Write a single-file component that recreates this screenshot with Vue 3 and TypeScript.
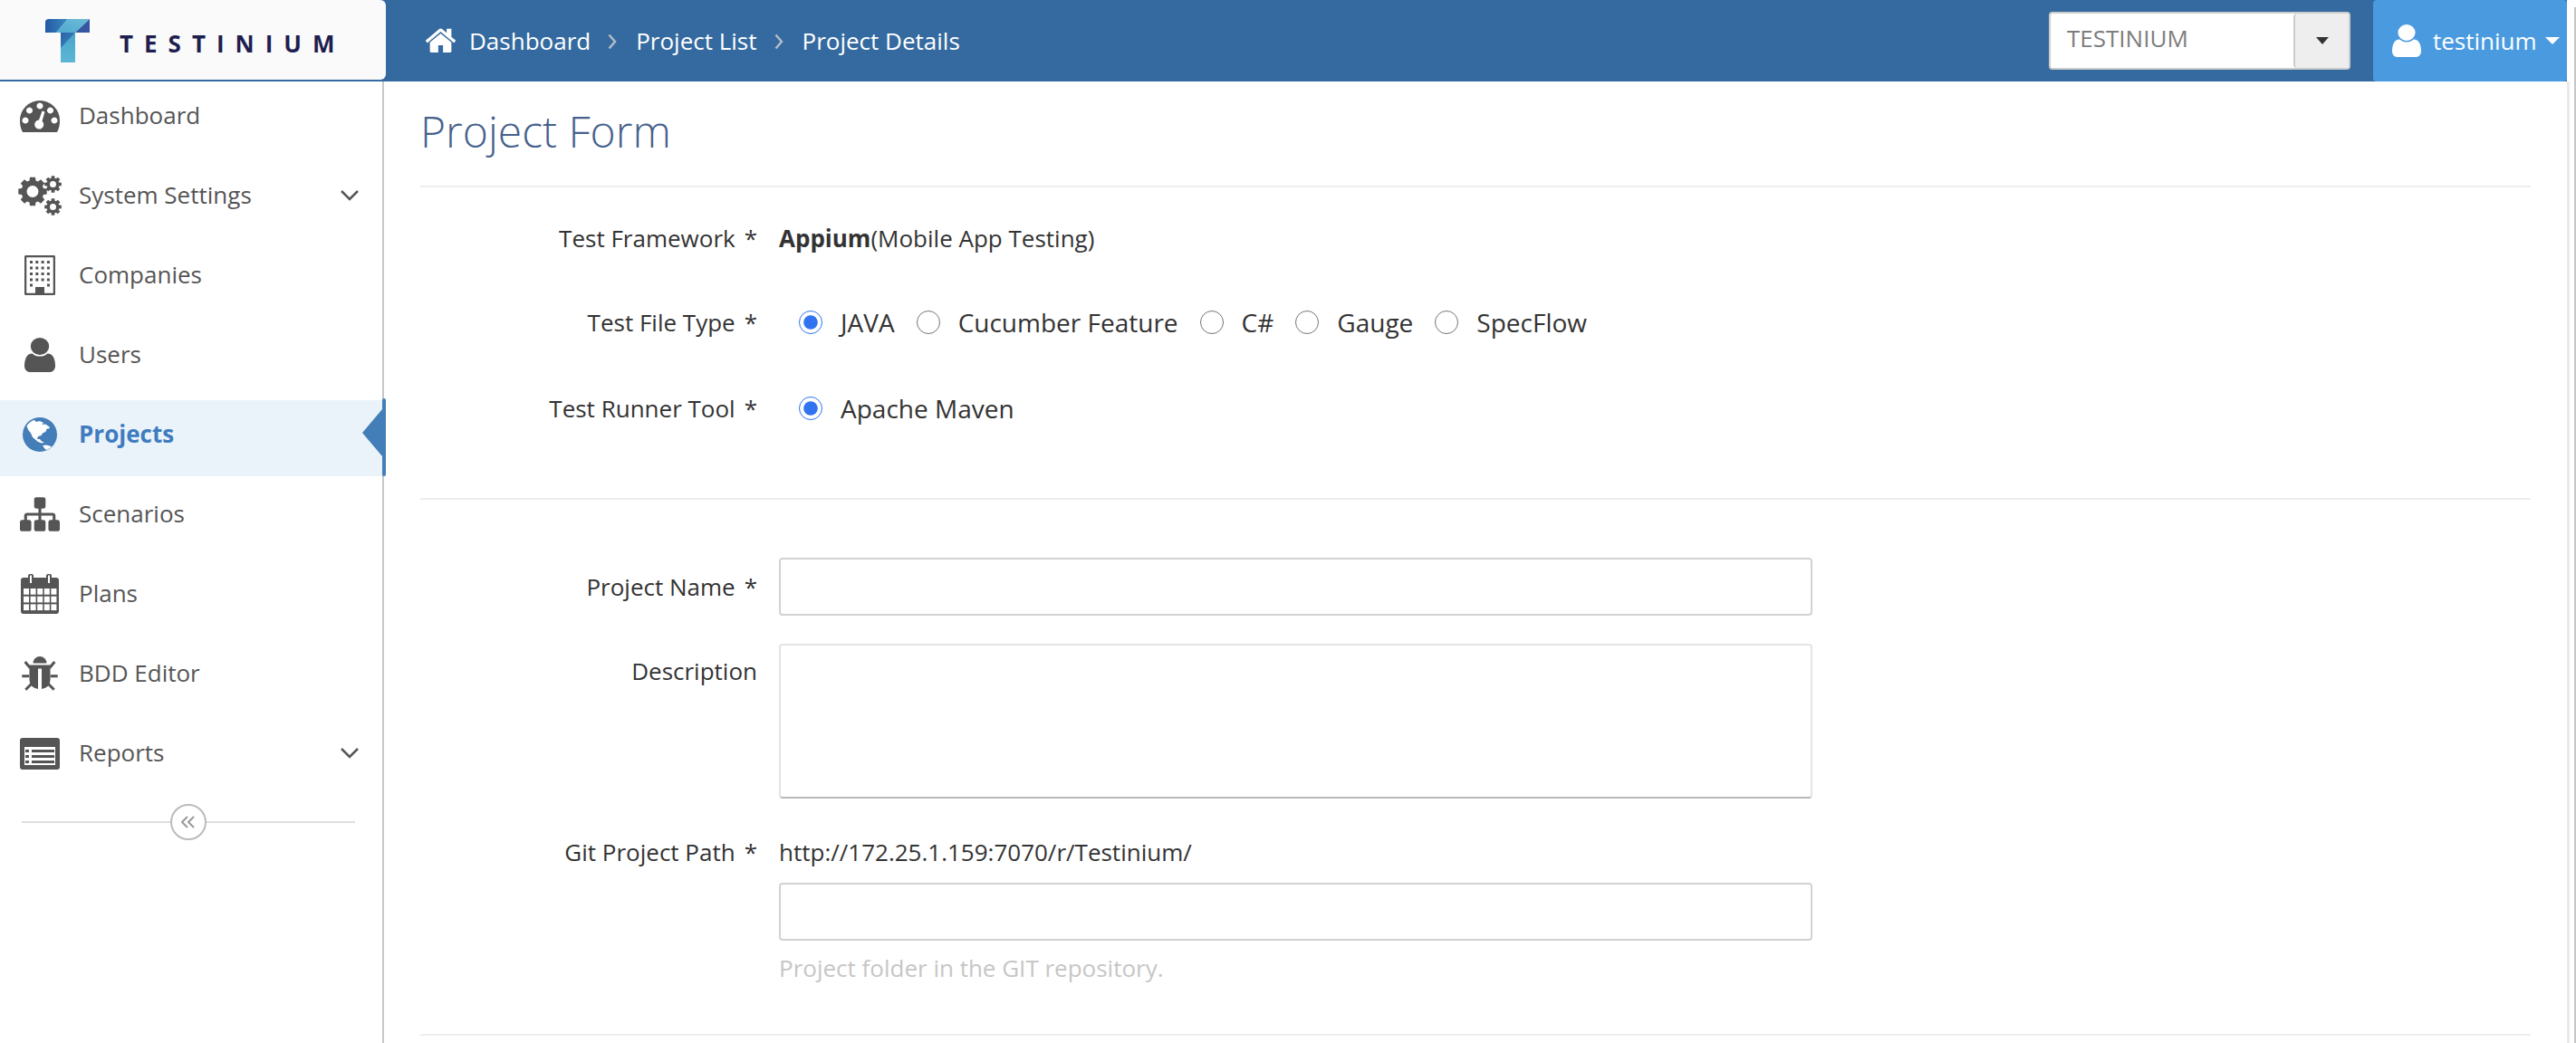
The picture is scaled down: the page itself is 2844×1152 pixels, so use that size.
<script setup lang="ts">
interface MenuItem {
  label: string
  icon: string
  active?: boolean
  children?: boolean
}

const menu: MenuItem[] = [
  { label: 'Dashboard', icon: 'dashboard' },
  { label: 'System Settings', icon: 'cogs', children: true },
  { label: 'Companies', icon: 'building' },
  { label: 'Users', icon: 'user' },
  { label: 'Projects', icon: 'globe', active: true },
  { label: 'Scenarios', icon: 'sitemap' },
  { label: 'Plans', icon: 'calendar' },
  { label: 'BDD Editor', icon: 'bug' },
  { label: 'Reports', icon: 'list', children: true },
]

const fileTypes = ['JAVA', 'Cucumber Feature', 'C#', 'Gauge', 'SpecFlow']

const userPath =
  'M1536 1399q0 109-62.5 187t-150.5 78h-854q-88 0-150.5-78t-62.5-187q0-85 8.5-160.5t31.5-152 58.5-131 94-89 134.5-34.5q131 128 313 128t313-128q76 0 134.5 34.5t94 89 58.5 131 31.5 152 8.5 160.5zm-256-887q0 159-112.5 271.5t-271.5 112.5-271.5-112.5-112.5-271.5 112.5-271.5 271.5-112.5 271.5 112.5 112.5 271.5z'
const homePath =
  'M1472 992v480q0 26-19 45t-45 19h-384v-384h-256v384h-384q-26 0-45-19t-19-45v-480q0-1 .5-3t.5-3l575-474 575 474q1 2 1 6zm223-69l-62 74q-8 9-21 11h-3q-13 0-21-7l-692-577-692 577q-12 8-24 7-13-2-21-11l-62-74q-8-10-7-23.5t11-21.5l719-599q32-26 76-26t76 26l244 204v-195q0-14 9-23t23-9h192q14 0 23 9t9 23v408l219 182q10 8 11 21.5t-7 23.5z'
const sitemapPath =
  'M1792 1248v320q0 40-28 68t-68 28h-320q-40 0-68-28t-28-68v-320q0-40 28-68t68-28h96v-192h-512v192h96q40 0 68 28t28 68v320q0 40-28 68t-68 28h-320q-40 0-68-28t-28-68v-320q0-40 28-68t68-28h96v-192h-512v192h96q40 0 68 28t28 68v320q0 40-28 68t-68 28h-320q-40 0-68-28t-28-68v-320q0-40 28-68t68-28h96v-192q0-52 38-90t90-38h512v-192h-96q-40 0-68-28t-28-68v-320q0-40 28-68t68-28h320q40 0 68 28t28 68v320q0 40-28 68t-68 28h-96v192h512q52 0 90 38t38 90v192h96q40 0 68 28t28 68z'

// toothed ring with a hole, used three times for the cogs icon
function gearPath(cx: number, cy: number, outer: number, inner: number, hole: number, teeth: number): string {
  const pts: string[] = []
  const step = (Math.PI * 2) / teeth
  for (let i = 0; i < teeth; i++) {
    const a = i * step
    const w = step * 0.24
    const pairs: [number, number][] = [
      [inner, a - step * 0.36],
      [outer, a - w],
      [outer, a + w],
      [inner, a + step * 0.36],
    ]
    for (const [r, t] of pairs) {
      pts.push(`${(cx + r * Math.cos(t)).toFixed(2)} ${(cy + r * Math.sin(t)).toFixed(2)}`)
    }
  }
  const ring = `M${pts.join('L')}Z`
  const cut = `M${cx - hole} ${cy}a${hole} ${hole} 0 1 0 ${hole * 2} 0a${hole} ${hole} 0 1 0 ${-hole * 2} 0Z`
  return ring + cut
}

const cogs = [gearPath(16, 17.5, 16, 12.5, 6.5, 8), gearPath(38.5, 9.5, 9.5, 7, 3.5, 8), gearPath(38.5, 34.5, 9.5, 7, 3.5, 8)]

const calendarCols = [0, 1, 2, 3, 4]
const calendarRows = [0, 1, 2]
const buildingCols = [0, 1, 2, 3]
const buildingRows = [0, 1, 2, 3]
</script>

<template>
  <div class="app">
    <header class="topbar">
      <div class="brand">
        <svg class="brand-mark" viewBox="0 0 49 48" width="49" height="48">
          <defs>
            <linearGradient id="tmLeft" x1="0" y1="0" x2="1" y2="0">
              <stop offset="0" stop-color="#2458a4" />
              <stop offset="1" stop-color="#3a8cc2" />
            </linearGradient>
            <linearGradient id="tmMid" x1="0" y1="1" x2="1" y2="0">
              <stop offset="0" stop-color="#4fa8cf" />
              <stop offset="1" stop-color="#6cbcd8" />
            </linearGradient>
            <linearGradient id="tmFold" x1="0" y1="0" x2="1" y2="1">
              <stop offset="0" stop-color="#2a62a6" />
              <stop offset="1" stop-color="#3a8cc0" />
            </linearGradient>
            <linearGradient id="tmStem" x1="0" y1="0" x2="0" y2="1">
              <stop offset="0" stop-color="#4aa4cc" />
              <stop offset="1" stop-color="#5cb6d4" />
            </linearGradient>
          </defs>
          <path d="M4 0H25L12 15H0V4Q0 0 4 0Z" fill="url(#tmLeft)" />
          <path d="M25 0H49L33 15H12Z" fill="url(#tmMid)" />
          <path d="M49 0V15H33Z" fill="#3556a3" />
          <path d="M17 15H33V48H17Z" fill="url(#tmStem)" />
          <path d="M17 15H33L17 32Z" fill="url(#tmFold)" />
        </svg>
        <span class="brand-name">TESTINIUM</span>
      </div>
      <nav class="crumbs">
        <svg class="crumb-home" viewBox="0 128 1792 1408" width="37" height="29"><path :d="homePath" /></svg>
        <span>Dashboard</span>
        <svg class="crumb-sep" viewBox="0 0 10 18" width="10" height="18"><path d="M1.5 1.5L8 9L1.5 16.5" /></svg>
        <span>Project List</span>
        <svg class="crumb-sep" viewBox="0 0 10 18" width="10" height="18"><path d="M1.5 1.5L8 9L1.5 16.5" /></svg>
        <span>Project Details</span>
      </nav>
      <div class="company-select">
        <span class="company-value">TESTINIUM</span>
        <span class="company-btn"><i class="caret-dark"></i></span>
      </div>
      <div class="user-menu">
        <svg viewBox="256 128 1280 1536" width="32" height="36" preserveAspectRatio="none"><path :d="userPath" /></svg>
        <span>testinium</span>
        <i class="caret-light"></i>
      </div>
    </header>

    <div class="body">
      <aside class="sidebar">
        <ul class="menu">
          <li v-for="item in menu" :key="item.label" class="menu-item" :class="{ active: item.active }">
            <span class="menu-icon">
              <svg v-if="item.icon === 'dashboard'" viewBox="0 0 44 35" width="44" height="35">
                <path fill-rule="evenodd" d="M22 0A22 22 0 0 1 44 22Q44 30 41 35H3Q0 30 0 22A22 22 0 0 1 22 0ZM22 2.5a3.5 3.5 0 1 0 .01 0ZM10.5 7.5a3.5 3.5 0 1 0 .01 0ZM33.500 7.5a3.500 3.500 0 1 0 .01 0ZM6 18.5a3.500 3.500 0 1 0 .01 0ZM38 18.500a3.500 3.500 0 1 0 .01 0ZM24.500 11.500L21 21.600a5 5 0 1 0 3.500 1.200L27.500 12.500Z" />
              </svg>
              <svg v-else-if="item.icon === 'cogs'" viewBox="0 0 48 44" width="48" height="44">
                <path v-for="d in cogs" :key="d" fill-rule="evenodd" :d="d" />
              </svg>
              <svg v-else-if="item.icon === 'building'" viewBox="0 0 34 44" width="34" height="44">
                <rect x="1" y="1" width="32" height="42" rx="1.500" fill="none" stroke="#555" stroke-width="2.500" />
                <template v-for="r in buildingRows" :key="r">
                  <rect v-for="c in buildingCols" :key="c" :x="6 + c * 6.300" :y="6 + r * 6.500" width="3" height="3" />
                </template>
                <rect x="6" y="31.500" width="3" height="3" />
                <rect x="25" y="31.500" width="3" height="3" />
                <path d="M12 43V35H22V43Z" />
              </svg>
              <svg v-else-if="item.icon === 'user'" viewBox="256 128 1280 1536" width="34" height="38" preserveAspectRatio="none">
                <path :d="userPath" />
              </svg>
              <svg v-else-if="item.icon === 'globe'" viewBox="0 0 38 38" width="38" height="38">
                <circle cx="19" cy="19" r="19" fill="#447eb8" />
                <path fill="#fff" d="M4.500 9.500Q8 4 13 3L15 5L19 4L23 6L21 8L25 7.500L29 10L30 12L26 13Q27 15 25 16L22 17.500Q21 20 19 20.500L17 21L16 24L19 24L21 26.500L24 27.500L21 28.500L17 27L14 24.500L11 22L9 17.500L6 13.500Z" />
                <path fill="#fff" d="M22 31L26 30.500L30 31.500L32 32.500Q29 35 26 36L24 34Z" />
              </svg>
              <svg v-else-if="item.icon === 'sitemap'" viewBox="0 128 1792 1536" width="44" height="38">
                <path :d="sitemapPath" />
              </svg>
              <svg v-else-if="item.icon === 'calendar'" viewBox="0 0 42 44" width="42" height="44">
                <path fill-rule="evenodd" d="M3 4H8V1.500Q8 0 10 0H12Q14 0 14 1.500V4H28V1.500Q28 0 30 0H32Q34 0 34 1.500V4H39Q42 4 42 7V41Q42 44 39 44H3Q0 44 0 41V7Q0 4 3 4ZM10 1.500V10H12V1.500ZM30 1.500V10H32V1.500Z" />
                <template v-for="r in calendarRows" :key="r">
                  <rect v-for="c in calendarCols" :key="c" class="cell" :x="3 + c * 7.600" :y="16 + r * 8.700" width="6" height="6.700" />
                </template>
              </svg>
              <svg v-else-if="item.icon === 'bug'" viewBox="0 0 40 38" width="40" height="38">
                <path d="M12.500 7.500A7.500 7.500 0 0 1 27.500 7.500Z" />
                <path d="M8.500 9.500H31.500V26Q31.500 34 22 36V13.500H18V36Q8.500 34 8.500 26Z" />
                <path class="bug-leg" d="M3.700 6L9.300 12.700M36.300 6L30.700 12.700M0.300 21.700H8.300M39.700 21.700H31.700M4.300 36.700L10.300 30.700M35.700 36.700L29.700 30.700" />
              </svg>
              <svg v-else viewBox="0 0 44 35" width="44" height="35">
                <path fill-rule="evenodd" d="M3 0H41Q44 0 44 3V32Q44 35 41 35H3Q0 35 0 32V3Q0 0 3 0ZM5 10V30H39V10Z" />
                <path d="M6 13H10V16H6ZM13 13H38V16H13ZM6 19H10V22H6ZM13 19H38V22H13ZM6 25H10V28H6ZM13 25H38V28H13Z" />
              </svg>
            </span>
            <span class="menu-label">{{ item.label }}</span>
            <svg v-if="item.children" class="menu-chevron" viewBox="0 0 20 12" width="20" height="12">
              <path d="M1 1L10 10L19 1" />
            </svg>
          </li>
        </ul>
        <div class="collapse">
          <span class="collapse-btn">
            <svg viewBox="0 0 16 14" width="16" height="14"><path d="M7 1L1 7L7 13M14 1L8 7L14 13" /></svg>
          </span>
        </div>
      </aside>

      <main class="content">
        <h1 class="page-title">Project Form</h1>

        <section class="section choices">
          <div class="row row-text row-first">
            <label class="field-label">Test Framework<em>*</em></label>
            <div class="framework"><strong>Appium</strong>(Mobile App Testing)</div>
          </div>
          <div class="row row-text">
            <label class="field-label">Test File Type<em>*</em></label>
            <div class="radios">
              <label v-for="(t, i) in fileTypes" :key="t" class="radio">
                <input type="radio" name="fileType" :checked="i === 0" />{{ t }}
              </label>
            </div>
          </div>
          <div class="row row-text">
            <label class="field-label">Test Runner Tool<em>*</em></label>
            <div class="radios">
              <label class="radio"><input type="radio" name="runner" checked />Apache Maven</label>
            </div>
          </div>
        </section>

        <section class="section details">
          <div class="row row-input">
            <label class="field-label">Project Name<em>*</em></label>
            <input class="text-input" type="text" />
          </div>
          <div class="row row-area">
            <label class="field-label">Description</label>
            <textarea class="text-area"></textarea>
          </div>
          <div class="row row-git">
            <label class="field-label">Git Project Path<em>*</em></label>
            <div class="git-field">
              <div class="git-url">http://172.25.1.159:7070/r/Testinium/</div>
              <input class="text-input" type="text" />
              <div class="help">Project folder in the GIT repository.</div>
            </div>
          </div>
        </section>
      </main>
    </div>
    <i class="page-edge"></i>
  </div>
</template>

<style>
html,
body {
  margin: 0;
  background: #fff;
}
</style>

<style scoped>
.app {
  position: relative;
  width: 2844px;
  height: 1152px;
  overflow: hidden;
  display: flex;
  flex-direction: column;
  font-family: "Open Sans", "Noto Sans", sans-serif;
  font-size: 26px;
  color: #333;
  background: #fff;
}

.page-edge {
  position: absolute;
  top: 8px;
  right: 0;
  bottom: 0;
  width: 2px;
  background: #c6c6c6;
}

.topbar {
  display: flex;
  align-items: center;
  height: 90px;
  width: 2834px;
  background: #346a9f;
  flex-shrink: 0;
}

.brand {
  display: flex;
  align-items: center;
  gap: 33px;
  box-sizing: border-box;
  width: 426px;
  height: 88px;
  margin-bottom: 2px;
  padding: 0 0 0 50px;
  background: #fafafa;
  border-radius: 0 6px 6px 0;
}

.brand-mark {
  flex-shrink: 0;
  margin-top: 2px;
}

.brand-name {
  font-size: 26px;
  font-weight: 700;
  letter-spacing: 12px;
  color: #1f1e50;
  margin-top: 8px;
}

.crumbs {
  display: flex;
  align-items: center;
  color: #fff;
  padding-left: 42px;
  flex: 1;
}

.crumb-home {
  fill: #fff;
  margin-right: 13px;
  margin-bottom: 3px;
}

.crumb-sep {
  margin: 2px 21px 0 19px;
  fill: none;
  stroke: #b4bcc6;
  stroke-width: 2.5;
}

.company-select {
  display: flex;
  align-items: stretch;
  box-sizing: border-box;
  width: 333px;
  height: 64px;
  background: #fff;
  border: 2px solid #ccc;
  border-radius: 4px;
  margin-right: 25px;
}

.company-value {
  flex: 1;
  padding-left: 18px;
  line-height: 54px;
  color: #7d7d7d;
}

.company-btn {
  width: 59px;
  display: flex;
  align-items: center;
  justify-content: center;
  background: #eee;
  border-left: 2px solid #ccc;
  border-radius: 4px;
}

.caret-dark {
  border-top: 8px solid #333;
  border-left: 7px solid transparent;
  border-right: 7px solid transparent;
}

.user-menu {
  display: flex;
  align-items: center;
  box-sizing: border-box;
  width: 214px;
  height: 90px;
  padding-left: 21px;
  background: #4a9ae0;
  color: #fff;
  fill: #fff;
  border-radius: 4px;
  gap: 13px;
}

.caret-light {
  border-top: 8px solid #fff;
  border-left: 8px solid transparent;
  border-right: 8px solid transparent;
  margin-left: -4px;
}

.body {
  display: flex;
  flex: 1;
  min-height: 0;
  width: 2837px;
  border-right: 3px solid #eaeaea;
  box-sizing: border-box;
}

.sidebar {
  box-sizing: border-box;
  width: 424px;
  flex-shrink: 0;
  border-right: 2px solid #c8c8c8;
  color: #555;
}

.menu {
  list-style: none;
  margin: 0;
  padding: 0;
  display: flex;
  flex-direction: column;
  gap: 4px;
}

.menu-item {
  position: relative;
  display: flex;
  align-items: center;
  box-sizing: border-box;
  height: 84px;
  padding-bottom: 8px;
}

.menu-icon {
  width: 88px;
  flex-shrink: 0;
  display: flex;
  justify-content: center;
  fill: #555;
}

.menu-icon svg {
  display: block;
}

.menu-label {
  flex: 1;
  margin-left: -1px;
  padding-bottom: 3px;
}

.menu-chevron {
  margin-right: 26px;
  fill: none;
  stroke: #555;
  stroke-width: 2.5;
}

.menu-item.active {
  background: #ebf3fa;
  color: #3e7cbf;
  font-weight: 700;
}

.menu-item.active .menu-icon {
  fill: #447eb8;
}

/* blue notch on the sidebar edge */
.menu-item.active::before {
  content: "";
  position: absolute;
  right: -4px;
  top: -2px;
  width: 4px;
  height: 86px;
  background: #447eb8;
  border-radius: 2px;
}

.menu-item.active::after {
  content: "";
  position: absolute;
  right: 0;
  top: 10px;
  border-top: 26px solid transparent;
  border-bottom: 26px solid transparent;
  border-right: 22px solid #447eb8;
}

.cell {
  fill: #fff;
}

.bug-leg {
  fill: none;
  stroke: #555;
  stroke-width: 3;
}

.collapse {
  position: relative;
  height: 2px;
  margin: 29px 30px 0 24px;
  background: #ddd;
}

.collapse-btn {
  position: absolute;
  left: 164px;
  top: -19px;
  box-sizing: border-box;
  width: 40px;
  height: 40px;
  display: flex;
  align-items: center;
  justify-content: center;
  background: #fff;
  border: 2px solid #bbb;
  border-radius: 50%;
}

.collapse-btn svg {
  fill: none;
  stroke: #999;
  stroke-width: 2;
}

.content {
  flex: 1;
  min-width: 0;
  padding: 0 40px 0 40px;
}

.page-title {
  margin: 0;
  height: 117px;
  box-sizing: border-box;
  padding-top: 25px;
  font-size: 48px;
  line-height: 60px;
  font-weight: 300;
  color: #46618c;
  border-bottom: 2px solid #eee;
}

.section {
  border-bottom: 2px solid #eee;
}

.choices {
  height: 345px;
  box-sizing: border-box;
  padding-top: 34px;
  display: flex;
  flex-direction: column;
}

.row {
  display: flex;
}

.row-text {
  height: 95px;
  flex-shrink: 0;
  align-items: flex-start;
  line-height: 44px;
}

.row-first {
  height: 93px;
}

.field-label {
  width: 372px;
  flex-shrink: 0;
  text-align: right;
  margin-right: 24px;
}

.field-label em {
  font-style: normal;
  margin-left: 10px;
}

.framework strong {
  font-weight: 700;
}

.radios {
  display: flex;
  gap: 24px;
  padding-left: 22px;
  font-size: 28px;
}

.radio {
  display: flex;
  align-items: center;
  gap: 20px;
  height: 44px;
}

.radio input {
  width: 26px;
  height: 26px;
  margin: 0;
  accent-color: #2f73f0;
}

.details {
  box-sizing: border-box;
  padding-top: 64px;
  height: 592px;
}

.text-input,
.text-area {
  display: block;
  box-sizing: border-box;
  width: 1141px;
  border: 2px solid #d2d2d2;
  border-radius: 4px;
  background: #fff;
  outline: none;
  padding: 0;
}

.text-input {
  height: 64px;
}

.text-area {
  height: 171px;
  resize: none;
  border-color: #e4e4e4;
  border-bottom-color: #b9b9b9;
}

.row-input {
  height: 95px;
  align-items: flex-start;
  line-height: 64px;
}

.row-area {
  height: 171px;
  line-height: 44px;
  margin-bottom: 37px;
}

.row-area .field-label {
  padding-top: 8px;
}

.row-git {
  line-height: 44px;
}

.git-url {
  height: 56px;
}

.help {
  margin-top: 8px;
  color: #c6c6c6;
}
</style>
